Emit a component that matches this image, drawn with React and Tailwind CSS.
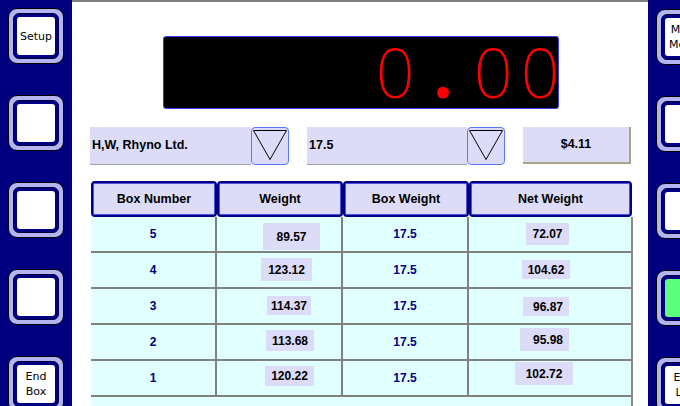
import React from "react";

function SideButton({ lines = [], green = false }) {
  return (
    <div className="w-[56px] h-[56px] shrink-0 rounded-[9px] border border-black bg-[#b4b4f0] p-[4px]">
      <div className="w-full h-full rounded-[6px] border border-[#000040] bg-[#000080] p-[3px]">
        <div
          className={
            "w-full h-full rounded-[3px] flex flex-col items-center justify-center font-['DejaVu_Sans',sans-serif] text-[11px] leading-[15px] text-black whitespace-nowrap " +
            (green ? "bg-[#5cff7c]" : "bg-white")
          }
        >
          {lines.map((l, i) => (
            <span key={i}>{l}</span>
          ))}
        </div>
      </div>
    </div>
  );
}

function DropButton() {
  return (
    <div className="w-[38px] h-[38px] shrink-0 rounded-[4px] border border-[#5a78ff] bg-[#dcdcf8] flex items-center justify-center">
      <svg width="36" height="36" viewBox="0 0 36 36">
        <polygon points="1.5,2.5 34.5,2.5 18,31.5" fill="none" stroke="#000" strokeWidth="1" />
      </svg>
    </div>
  );
}

const rows = [
  {
    n: "5",
    w: "89.57",
    wb: "ml-[46px] mt-[6px] w-[57px] h-[27px]",
    net: "72.07",
    nb: "ml-[57px] mt-[6px] w-[43px] h-[22px]",
  },
  {
    n: "4",
    w: "123.12",
    wb: "ml-[44px] mt-[5px] w-[51px] h-[23px]",
    net: "104.62",
    nb: "ml-[53px] mt-[7px] w-[48px] h-[19px]",
  },
  {
    n: "3",
    w: "114.37",
    wb: "ml-[50px] mt-[7px] w-[44px] h-[19px]",
    net: "96.87",
    nb: "ml-[54px] mt-[8px] w-[46px] h-[19px] pl-[4px]",
  },
  {
    n: "2",
    w: "113.68",
    wb: "ml-[49px] mt-[5px] w-[48px] h-[21px]",
    net: "95.98",
    nb: "ml-[51px] mt-[3px] w-[49px] h-[23px] pl-[7px]",
  },
  {
    n: "1",
    w: "120.22",
    wb: "ml-[48px] mt-[5px] w-[49px] h-[20px]",
    net: "102.72",
    nb: "ml-[46px] mt-[1px] w-[58px] h-[23px]",
  },
];

const headCell =
  "h-full rounded-[4px] border-2 border-[#000080] shadow-[inset_0_0_0_1px_#5050e0] bg-[#dcdcf8] flex items-center justify-center";

export default function App() {
  return (
    <div className="w-[680px] h-[406px] overflow-hidden flex font-['Liberation_Sans',Arial,sans-serif]">
      {/* Left sidebar */}
      <div className="w-[72px] h-full shrink-0 bg-[#000080] flex flex-col pl-[8px] pt-[8px] gap-[31px]">
        <SideButton lines={["Setup"]} />
        <SideButton />
        <SideButton />
        <SideButton />
        <SideButton lines={["End", "Box"]} />
      </div>

      {/* Main */}
      <div className="w-[576px] h-full shrink-0 bg-white border-t-2 border-[#808080] flex flex-col">
        {/* Display */}
        <div className="mt-[34px] ml-[91px] w-[396px] h-[73px] rounded-[3px] border border-[#3838f0] bg-black flex items-start justify-end text-[#ff0000]">
          <span className="w-[36px] mt-[1px] flex justify-center font-['Noto_Sans',sans-serif] font-extralight text-[68px] leading-[68px]">0</span>
          <span className="w-[20px] ml-[20px] mt-[1px] flex justify-center font-['Noto_Sans',sans-serif] font-bold text-[68px] leading-[68px]">.</span>
          <span className="w-[36px] ml-[22px] mt-[1px] flex justify-center font-['Noto_Sans',sans-serif] font-extralight text-[68px] leading-[68px]">0</span>
          <span className="w-[36px] ml-[11px] mt-[1px] flex justify-center font-['Noto_Sans',sans-serif] font-extralight text-[68px] leading-[68px]">0</span>
        </div>

        {/* Controls */}
        <div className="flex items-start mt-[18px] ml-[18px] h-[38px] text-[12.5px] font-bold text-black">
          <div className="w-[161px] h-[38px] bg-[#dcdcf8] border-b border-[#a0a0a8] flex items-center pl-[2px]">
            H,W, Rhyno Ltd.
          </div>
          <DropButton />
          <div className="ml-[18px] w-[160px] h-[38px] bg-[#dcdcf8] border-b border-[#a0a0a8] flex items-center pl-[2px]">
            17.5
          </div>
          <DropButton />
          <div className="ml-[18px] w-[108px] h-[37px] bg-[#dcdcf8] border-r-2 border-b-2 border-[#a8a488] flex items-center justify-center">
            $4.11
          </div>
        </div>

        {/* Table */}
        <div className="mt-[16px] ml-[19px] w-[542px] flex-1 flex flex-col">
          <div className="flex h-[36px] text-[12.5px] font-bold text-black">
            <div className={"w-[126px] " + headCell}>Box Number</div>
            <div className={"w-[126px] " + headCell}>Weight</div>
            <div className={"w-[126px] " + headCell}>Box Weight</div>
            <div className={"w-[163px] " + headCell}>Net Weight</div>
          </div>
          <div className="flex-1 w-[542px] bg-[#e0ffff] border-r-2 border-[#8a8a80] flex flex-col text-[12px] font-bold">
            {rows.map((r) => (
              <div key={r.n} className="flex h-[36px] border-b-2 border-[#808080]">
                <div className="w-[126px] h-full border-r-2 border-[#808080] flex items-center justify-center text-[#000080]">
                  {r.n}
                </div>
                <div className="w-[126px] h-full border-r-2 border-[#808080] flex items-start">
                  <div className={"bg-[#dcdcf8] flex items-center justify-center text-black " + r.wb}>{r.w}</div>
                </div>
                <div className="w-[126px] h-full border-r-2 border-[#808080] flex items-center justify-center text-[#000080]">
                  17.5
                </div>
                <div className="w-[162px] h-full flex items-start">
                  <div className={"bg-[#dcdcf8] flex items-center justify-center text-black " + r.nb}>{r.net}</div>
                </div>
              </div>
            ))}
          </div>
        </div>
      </div>

      {/* Right sidebar */}
      <div className="w-[32px] h-full shrink-0 bg-[#000080] flex flex-col pl-[8px] pt-[9px] gap-[31px] overflow-hidden">
        <SideButton lines={["Main", "Menu"]} />
        <SideButton />
        <SideButton />
        <SideButton green />
        <SideButton lines={["End", "Lot"]} />
      </div>
    </div>
  );
}
